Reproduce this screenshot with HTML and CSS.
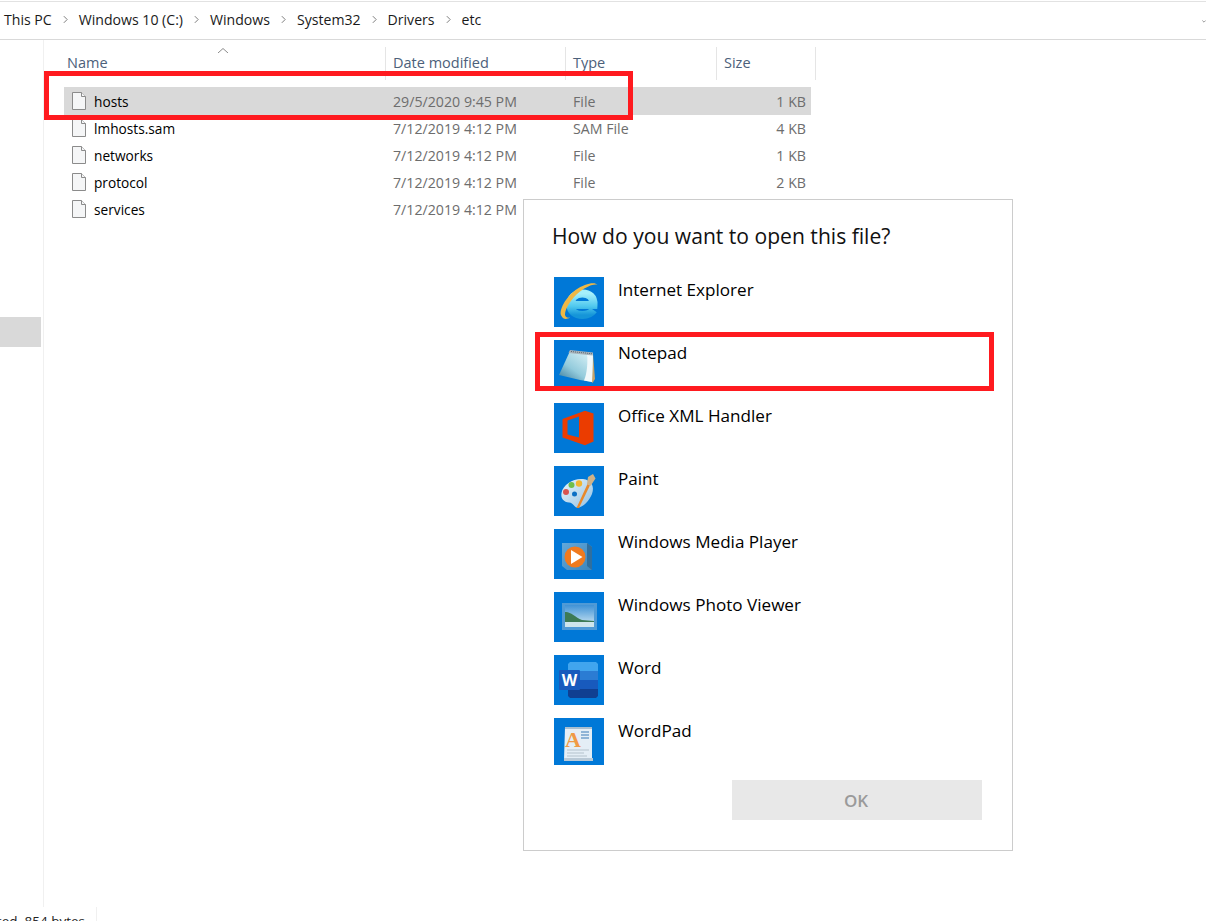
FILE: index.html
```html
<!DOCTYPE html>
<html lang="en">
<head>
    <meta charset="UTF-8">
    <title>How do you want to open this file?</title>
    <link rel="stylesheet" href="styles.css">
</head>
<body>
    <div class="explorer">
        <div class="crumbs">
            <span class="crumb">This PC</span>
            <svg class="chevron" viewBox="0 0 6 10"><path d="M1 1l4 4-4 4"/></svg>
            <span class="crumb">Windows 10 (C:)</span>
            <svg class="chevron" viewBox="0 0 6 10"><path d="M1 1l4 4-4 4"/></svg>
            <span class="crumb">Windows</span>
            <svg class="chevron" viewBox="0 0 6 10"><path d="M1 1l4 4-4 4"/></svg>
            <span class="crumb">System32</span>
            <svg class="chevron" viewBox="0 0 6 10"><path d="M1 1l4 4-4 4"/></svg>
            <span class="crumb">Drivers</span>
            <svg class="chevron" viewBox="0 0 6 10"><path d="M1 1l4 4-4 4"/></svg>
            <span class="crumb">etc</span>
            <svg class="history" viewBox="0 0 6 4"><path d="M.5.5L3 3 5.500.5"/></svg>
        </div>

        <div class="main">
            <div class="nav">
                <div class="nav-selected"></div>
            </div>
            <div class="files">
                <div class="head">
                    <div class="head-cell col-name">Name
                        <svg class="sort" viewBox="0 0 10 5"><path d="M0 5l5-4.500L10 5"/></svg>
                    </div>
                    <div class="head-cell">Date modified</div>
                    <div class="head-cell">Type</div>
                    <div class="head-cell col-last">Size</div>
                </div>

                <div class="row selected">
                    <div class="name"><svg class="file" viewBox="0 0 14 18"><path d="M.5.500h9l4 4v13H.5z"/><path d="M9.500.500v4h4"/></svg>hosts</div>
                    <div class="cell">29/5/2020 9:45 PM</div>
                    <div class="cell">File</div>
                    <div class="cell size">1 KB</div>
                </div>
                <div class="row">
                    <div class="name"><svg class="file" viewBox="0 0 14 18"><path d="M.5.500h9l4 4v13H.5z"/><path d="M9.500.500v4h4"/></svg>lmhosts.sam</div>
                    <div class="cell">7/12/2019 4:12 PM</div>
                    <div class="cell">SAM File</div>
                    <div class="cell size">4 KB</div>
                </div>
                <div class="row">
                    <div class="name"><svg class="file" viewBox="0 0 14 18"><path d="M.5.500h9l4 4v13H.5z"/><path d="M9.500.500v4h4"/></svg>networks</div>
                    <div class="cell">7/12/2019 4:12 PM</div>
                    <div class="cell">File</div>
                    <div class="cell size">1 KB</div>
                </div>
                <div class="row">
                    <div class="name"><svg class="file" viewBox="0 0 14 18"><path d="M.5.500h9l4 4v13H.5z"/><path d="M9.500.500v4h4"/></svg>protocol</div>
                    <div class="cell">7/12/2019 4:12 PM</div>
                    <div class="cell">File</div>
                    <div class="cell size">2 KB</div>
                </div>
                <div class="row">
                    <div class="name"><svg class="file" viewBox="0 0 14 18"><path d="M.5.500h9l4 4v13H.5z"/><path d="M9.500.500v4h4"/></svg>services</div>
                    <div class="cell">7/12/2019 4:12 PM</div>
                    <div class="cell">File</div>
                    <div class="cell size">3 KB</div>
                </div>
            </div>
        </div>

        <div class="status">
            <div class="status-text">1 item selected&nbsp; 854 bytes</div>
        </div>
    </div>

    <!-- open with dialog -->
    <div class="dialog">
        <div class="dialog-title">How do you want to open this file?</div>
        <div class="apps">
            <div class="app">
                <svg class="app-icon" viewBox="0 0 50 50">
                    <defs>
                        <linearGradient id="ie" x1="0" y1="0" x2="0" y2="1">
                            <stop offset="0" stop-color="#a5f0fb"/>
                            <stop offset="0.6" stop-color="#4fc8ee"/>
                            <stop offset="1" stop-color="#1595d8"/>
                        </linearGradient>
                    </defs>
                    <rect width="50" height="50" fill="#0078d7"/>
                    <path d="M17 28H39.500C40 20 35 16.500 28.500 16.500C21 16.500 16.500 21 16.500 28C16.500 34 21 38 28.500 38C33 38 37 36.500 39.500 33" fill="none" stroke="url(#ie)" stroke-width="8"/>
                    <path d="M7.500 39C4 34 12 20 21.500 13C31 6.500 41 4.500 43.500 8C40 6.500 33 9.500 26 14.500C17 21.500 11 32 11 37.500C11 40 13 41 16 40.500C12 43 9 42 7.500 39Z" fill="#efb845"/>
                </svg>
                <span class="app-name">Internet Explorer</span>
            </div>
            <div class="app">
                <svg class="app-icon" viewBox="0 0 50 50">
                    <defs>
                        <linearGradient id="pad" x1="0.900" y1="0" x2="0.100" y2="1">
                            <stop offset="0" stop-color="#dff4f8"/>
                            <stop offset="0.600" stop-color="#93cbdc"/>
                            <stop offset="1" stop-color="#3f7f9e"/>
                        </linearGradient>
                    </defs>
                    <rect width="50" height="50" fill="#0078d7"/>
                    <path d="M39 14L41 39L38.500 43L34 38Z" fill="#c9a468"/>
                    <path d="M16 11L39 13.500L38 42L26 40L5 35Z" fill="url(#pad)"/>
                    <path d="M33 13L39 13.500L38 42L30 40.500C33 34 34 22 33 13Z" fill="#f1f8fa"/>
                    <path d="M16 10L39 12.500L38.700 15.500L14.500 13Z" fill="#a7b3bb"/>
                    <path d="M17 11.500H38.500" stroke="#5d6b75" stroke-dasharray="1 1" transform="rotate(6 17 11.500)"/>
                </svg>
                <span class="app-name">Notepad</span>
            </div>
            <div class="app">
                <svg class="app-icon" viewBox="0 0 50 50">
                    <rect width="50" height="50" fill="#0078d7"/>
                    <path d="M8.500 16L31 7.700L39.500 10.500V38.500L31 42.300L8.500 34.500ZM13.500 31.500L25 34.500V13.500L13.500 17.500Z" fill="#eb3c00" fill-rule="evenodd"/>
                </svg>
                <span class="app-name">Office XML Handler</span>
            </div>
            <div class="app">
                <svg class="app-icon" viewBox="0 0 50 50">
                    <defs>
                        <linearGradient id="palette" x1="0" y1="0" x2="1" y2="1">
                            <stop offset="0" stop-color="#eaf5fb"/>
                            <stop offset="1" stop-color="#93c1e2"/>
                        </linearGradient>
                    </defs>
                    <rect width="50" height="50" fill="#0078d7"/>
                    <path d="M7.500 27C9 18 20 12 29 13C37 14 41 20 38 28C35 35 29 42 23 41.500C19.500 41 20 37 15 36.500C10 36 6.500 33 7.500 27Z" fill="url(#palette)"/>
                    <circle cx="12" cy="26" r="3" fill="#d9534f"/>
                    <circle cx="17.500" cy="19" r="3" fill="#6fbf4a"/>
                    <circle cx="25" cy="17.500" r="3.200" fill="#f2b632"/>
                    <circle cx="20.500" cy="28" r="2.500" fill="#0b6fc4"/>
                    <path d="M22.500 42L33.500 18L36 19.200L25 42Z" fill="#e8892b"/>
                    <path d="M33 18L34 11L39 8L41.500 12.500L36.500 20Z" fill="#d0b288"/>
                </svg>
                <span class="app-name">Paint</span>
            </div>
            <div class="app">
                <svg class="app-icon" viewBox="0 0 50 50">
                    <defs>
                        <linearGradient id="wmp" x1="0" y1="0" x2="1" y2="1">
                            <stop offset="0" stop-color="#62a8da"/>
                            <stop offset="1" stop-color="#3c86bd"/>
                        </linearGradient>
                    </defs>
                    <rect width="50" height="50" fill="#0078d7"/>
                    <path d="M8 14H33L38 18V41H13L8 37Z" fill="url(#wmp)"/>
                    <path d="M33 14L38 18V41L33 37Z" fill="#2f6f9f"/>
                    <circle cx="21" cy="28" r="10.500" fill="#f07a1e"/>
                    <path d="M17 21L28.500 28L17 35Z" fill="#fff"/>
                </svg>
                <span class="app-name">Windows Media Player</span>
            </div>
            <div class="app">
                <svg class="app-icon" viewBox="0 0 50 50">
                    <defs>
                        <linearGradient id="sky" x1="0" y1="0" x2="0" y2="1">
                            <stop offset="0" stop-color="#3f92d6"/>
                            <stop offset="1" stop-color="#d8ecf4"/>
                        </linearGradient>
                    </defs>
                    <rect width="50" height="50" fill="#0078d7"/>
                    <path d="M8 11H43V38H8Z" fill="#4f9ad6"/>
                    <rect x="11" y="13" width="29" height="22" fill="url(#sky)"/>
                    <path d="M11 20C16 19 21 25 28 28L40 29V35H11Z" fill="#3d7a55"/>
                    <path d="M11 30H40V35H11Z" fill="#cfe5ec"/>
                </svg>
                <span class="app-name">Windows Photo Viewer</span>
            </div>
            <div class="app">
                <svg class="app-icon" viewBox="0 0 50 50">
                    <rect width="50" height="50" fill="#0078d7"/>
                    <path d="M16 7H42L44 9V16H14V9Z" fill="#41a5ee"/>
                    <rect x="14" y="16" width="30" height="9" fill="#2b7cd3"/>
                    <rect x="14" y="25" width="30" height="9" fill="#185abd"/>
                    <path d="M14 34H44V41L42 43H16L14 41Z" fill="#103f91"/>
                    <rect x="5" y="15" width="21" height="20" rx="1" fill="#185abd"/>
                    <text class="word-w" x="15.500" y="31">W</text>
                </svg>
                <span class="app-name">Word</span>
            </div>
            <div class="app">
                <svg class="app-icon" viewBox="0 0 50 50">
                    <rect width="50" height="50" fill="#0078d7"/>
                    <path d="M11 9H38V42H10Z" fill="#e4eef6"/>
                    <path d="M10 40H39V43H10Z" fill="#b9c9d6"/>
                    <path d="M11 9H38V11H11Z" fill="#a9bfd0"/>
                    <text class="pad-a" x="19" y="29">A</text>
                    <path d="M27 14H35M27 17H35M27 20H35" stroke="#8fb4d6" stroke-width="2"/>
                    <path d="M13 32H35M13 35H30M13 38H33" stroke="#b4c2cc"/>
                </svg>
                <span class="app-name">WordPad</span>
            </div>
        </div>
        <div class="dialog-foot">
            <button class="ok">OK</button>
        </div>
    </div>

    <!-- red annotation boxes -->
    <div class="mark mark-hosts"></div>
    <div class="mark mark-notepad"></div>
</body>
</html>
```

FILE: styles.css
```css
* {
    box-sizing: border-box;
}

body {
    margin: 0;
    height: 921px;
    overflow: hidden;
    position: relative;
    background: #fff;
    color: #000;
    font-family: "Open Sans", "Noto Sans", sans-serif;
}

.explorer {
    height: 921px;
    display: flex;
    flex-direction: column;
}

/* Breadcrumb */
.crumbs {
    height: 39px;
    margin-top: 1px;
    padding: 0 0 2px 4px;
    display: flex;
    align-items: center;
    border-top: 1px solid #e2e2e2;
    border-bottom: 1px solid #d9d9d9;
    font-size: 14.100px;
    color: #1a1a1a;
    position: relative;
}

.chevron {
    width: 5px;
    height: 9px;
    margin: 0 11px;
    fill: none;
    stroke: #7d7d7d;
    stroke-width: 1.200;
}

.history {
    position: absolute;
    right: 0;
    top: 18px;
    width: 4px;
    height: 3px;
    fill: none;
    stroke: #666;
}

/* Main area */
.main {
    flex: 1;
    display: flex;
    min-height: 0;
}

.nav {
    width: 44px;
    border-right: 1px solid #f0f0f0;
    padding-top: 277px;
}

.nav-selected {
    width: 41px;
    height: 30px;
    background: #d9d9d9;
}

.files {
    flex: 1;
    padding: 7px 0 0 20px;
    font-size: 13.700px;
}

.head {
    display: grid;
    grid-template-columns: 321px 180px 151px 100px;
    width: 752px;
    height: 33px;
    margin-bottom: 7px;
    font-size: 14.500px;
    color: #4c607a;
}

.head-cell {
    border-left: 1px solid #e5e5e5;
    padding: 6px 0 0 7px;
    white-space: nowrap;
}

.col-name {
    border-left: 0;
    padding-left: 3px;
    position: relative;
}

.col-last {
    border-right: 1px solid #e5e5e5;
}

.sort {
    position: absolute;
    left: 154px;
    top: 1px;
    width: 10px;
    height: 5px;
    fill: none;
    stroke: #8a8a8a;
}

.row {
    display: grid;
    grid-template-columns: 321px 180px 151px 95px;
    width: 747px;
    height: 27px;
    padding-top: 1px;
    align-items: center;
}

.row.selected {
    background: #d9d9d9;
    box-shadow: 0 1px 0 #d9d9d9;
}

.name {
    display: flex;
    align-items: center;
    padding-left: 8px;
}

.file {
    width: 14px;
    height: 18px;
    margin: -1px 8px 0 0;
    fill: #f5f6f7;
    stroke: #8b8b8b;
}

.cell {
    padding-left: 8px;
    font-size: 14.200px;
    color: #6d6d6d;
    white-space: nowrap;
}

.cell.size {
    padding: 0 5px 0 0;
    text-align: right;
}

/* Cut-off status bar */
.status {
    height: 14px;
    overflow: hidden;
    width: 97px;
    border-right: 1px solid #f0f0f0;
    display: flex;
    justify-content: flex-end;
    font-size: 13.500px;
    white-space: nowrap;
    color: #222;
}

.status-text {
    padding-right: 11px;
    margin-top: 5px;
}

/* Dialog */
.dialog {
    position: absolute;
    left: 523px;
    top: 199px;
    width: 490px;
    height: 652px;
    background: #fff;
    border: 1px solid #ccc;
    padding: 22px 30px 0 28px;
}

.dialog-title {
    height: 55px;
    font-size: 21.100px;
    line-height: 28px;
    color: #111;
    white-space: nowrap;
}

.apps {
    height: 488px;
    overflow: hidden;
    padding-left: 2px;
    display: flex;
    flex-direction: column;
    gap: 13px;
}

.app {
    display: flex;
    gap: 14px;
    flex: none;
    height: 50px;
}

.app-icon {
    width: 50px;
    height: 50px;
    flex: none;
}

.app-name {
    font-size: 17.100px;
    line-height: 26px;
}

.word-w {
    font-family: "Open Sans", sans-serif;
    font-size: 16px;
    font-weight: 700;
    fill: #fff;
    text-anchor: middle;
}

.pad-a {
    font-family: "Liberation Serif", serif;
    font-size: 22px;
    font-weight: 700;
    fill: #f09a45;
    text-anchor: middle;
}

.dialog-foot {
    display: flex;
    justify-content: flex-end;
    margin-top: 15px;
}

.ok {
    width: 250px;
    height: 40px;
    padding: 0 2px 0 0;
    border: 0;
    background: #e8e8e8;
    color: #9a9a9a;
    font-family: inherit;
    font-size: 17px;
    font-weight: 600;
}

/* Annotations */
.mark {
    position: absolute;
    border: 5px solid #ff1a1f;
}

.mark-hosts {
    left: 44px;
    top: 71px;
    width: 589px;
    height: 49px;
}

.mark-notepad {
    left: 535px;
    top: 332px;
    width: 459px;
    height: 59px;
}
```
